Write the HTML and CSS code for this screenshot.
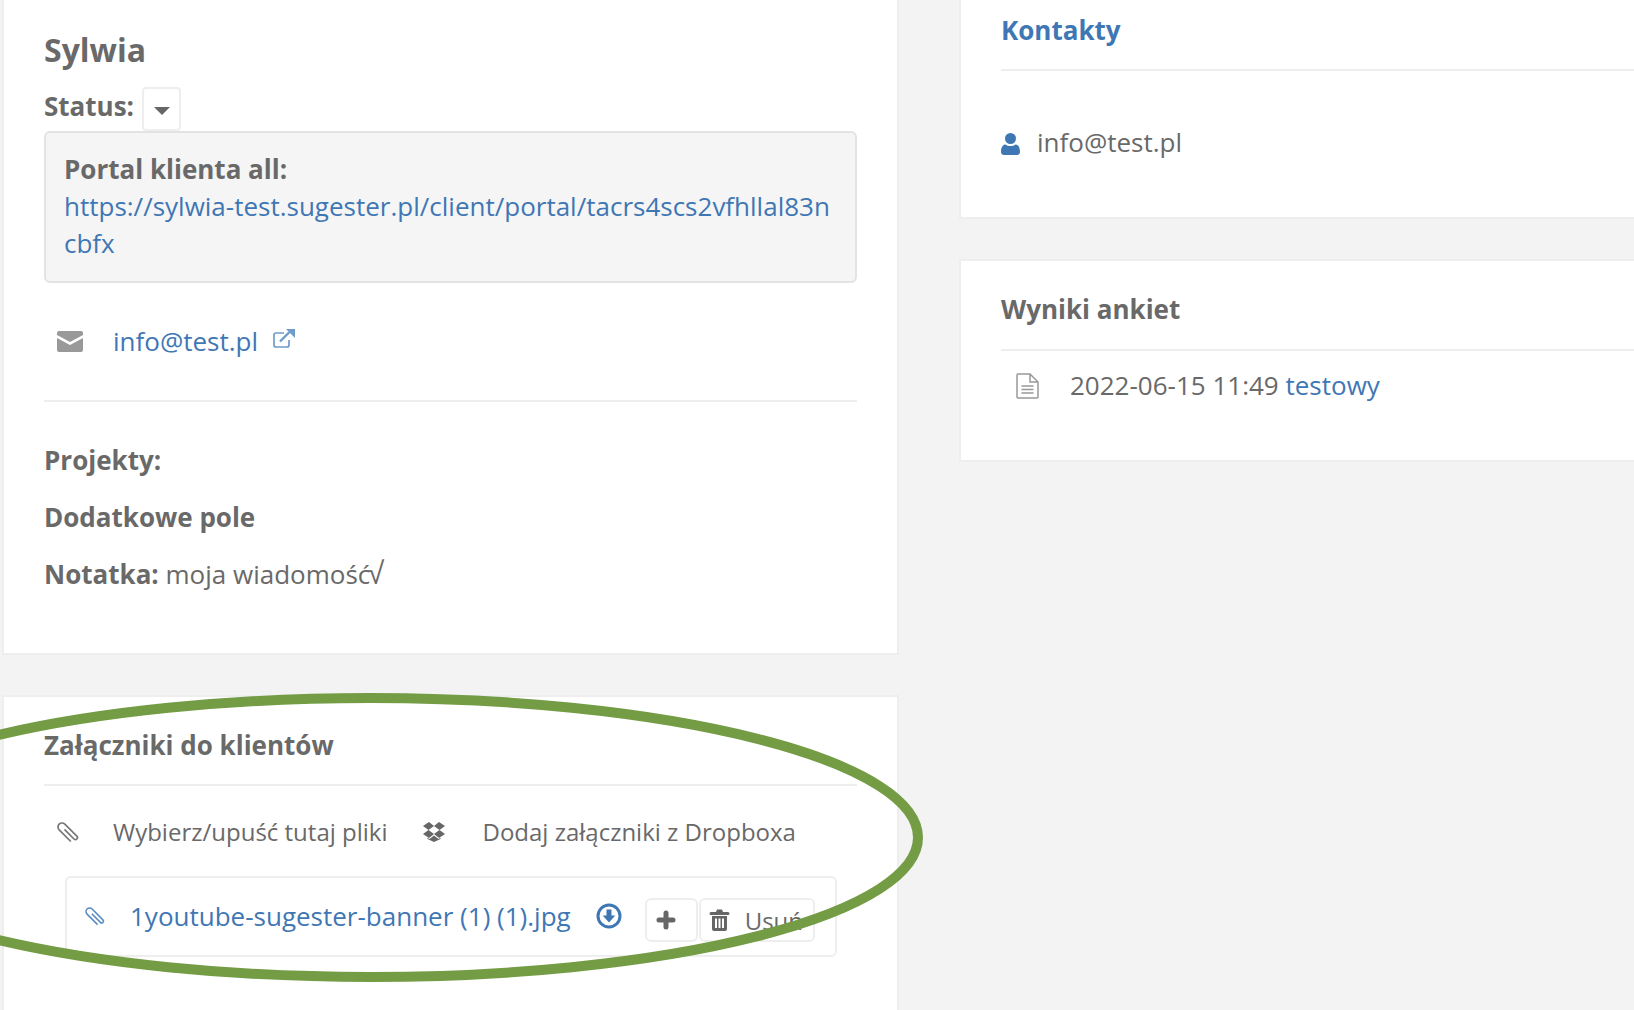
FILE: index.html
```html
<!DOCTYPE html>
<html lang="pl">
<head>
<meta charset="utf-8">
<title>Sylwia</title>
<link rel="stylesheet" href="styles.css">
</head>
<body>
<div class="page">
  <main class="left">
    <section class="card card-main">
      <h1 class="name">Sylwia</h1>
      <div class="status-row">
        <strong class="status-label">Status:</strong>
        <button class="caret-btn" type="button"><span class="caret"></span></button>
      </div>
      <div class="well">
        <strong>Portal klienta all:</strong><br>
        <a class="portal-link" href="#">https://sylwia-test.sugester.pl/client/portal/tacrs4scs2vfhllal83ncbfx</a>
      </div>
      <div class="mail-row">
        <svg class="ic-mail" viewBox="0 0 26 21"><path d="M2 0h22a2 2 0 0 1 2 2v2L13 11 0 4V2a2 2 0 0 1 2-2z"/><path d="M0 7l13 7 13-7v12a2 2 0 0 1-2 2H2a2 2 0 0 1-2-2z"/></svg>
        <a href="#">info@test.pl</a>
        <svg class="ic-ext" viewBox="0 0 22 19"><path d="M16 11v5a2 2 0 0 1-2 2H3a2 2 0 0 1-2-2V6a2 2 0 0 1 2-2h8" fill="none" stroke-width="1.7"/><path d="M7 12.500L16.500 3" fill="none" stroke-width="2.400"/><path class="fill" d="M13 0h9v9z"/></svg>
      </div>
      <hr class="rule rule-main">
      <p class="field"><strong>Projekty:</strong></p>
      <p class="field"><strong>Dodatkowe pole</strong></p>
      <p class="field"><strong>Notatka:</strong> moja wiadomość<span class="root">√</span></p>
    </section>

    <section class="card card-att">
      <h2 class="sec-title">Załączniki do klientów</h2>
      <hr class="rule">
      <div class="att-actions">
        <svg class="ic-clip" viewBox="0 0 20 20"><path transform="rotate(-45 10 10)" d="M10 5V18.500a2 2 0 0 0 4 0V1.500a4 4 0 0 0-8 0V18" fill="none" stroke-width="1.700"/></svg>
        <span class="act-text">Wybierz/upuść tutaj pliki</span>
        <svg class="ic-drop" viewBox="0 0 22 20"><path d="M6 0L0 4l5.500 4L11 4zM16 0l-5 4 5.500 4L22 4zM0 12l6 4 5-4-5.500-4zM22 12l-6 4-5-4 5.500-4zM11 13.500L6.500 17l-2-1.200V17L11 20l6.500-3v-1.200l-2 1.200z"/></svg>
        <span>Dodaj załączniki z Dropboxa</span>
      </div>
      <div class="file-box">
        <svg class="ic-clip ic-clip-blue" viewBox="0 0 20 20"><path transform="rotate(-45 10 10)" d="M10 5V18.500a2 2 0 0 0 4 0V1.500a4 4 0 0 0-8 0V18" fill="none" stroke-width="1.700"/></svg>
        <a class="file-link" href="#">1youtube-sugester-banner (1) (1).jpg</a>
        <svg class="ic-dl" viewBox="0 0 26 26"><circle cx="13" cy="13" r="11" fill="none" stroke-width="3"/><path class="fill" d="M10.500 6.500h5v6h3.800L13 19.500l-6.300-7h3.800z"/></svg>
        <button class="btn btn-plus" type="button"><svg class="ic-plus" viewBox="0 0 20 20"><path d="M10 3v14M3 10h14" fill="none" stroke-width="5" stroke-linecap="round"/></svg></button>
        <button class="btn btn-del" type="button"><svg class="ic-trash" viewBox="0 0 19 22"><path d="M6 3l1-2.500h5l1 2.500h5a1 1 0 0 1 0 3H1a1 1 0 0 1 0-3zM2 7h15v13a2 2 0 0 1-2 2H4a2 2 0 0 1-2-2zM5 9.500V19h2V9.500zM8.500 9.500V19h2V9.500zM12 9.500V19h2V9.500z" fill-rule="evenodd"/></svg><span>Usuń</span></button>
      </div>
    </section>
  </main>

  <aside class="right">
    <section class="card card-contacts">
      <h2 class="sec-title sec-link"><a href="#">Kontakty</a></h2>
      <hr class="rule">
      <div class="contact-row">
        <svg class="ic-user" viewBox="0 0 19 22"><circle cx="9.500" cy="5.500" r="5.500"/><path d="M0 19c0-5 2-7.500 4.500-7.500 1.500 1 3 1.500 5 1.500s3.500-.5 5-1.500C17 11.500 19 14 19 19c0 2-1.500 3-3 3H3c-1.500 0-3-1-3-3z"/></svg>
        <span>info@test.pl</span>
      </div>
    </section>
    <section class="card card-surveys">
      <h2 class="sec-title">Wyniki ankiet</h2>
      <hr class="rule rule-survey">
      <div class="survey-row">
        <svg class="ic-file" viewBox="0 0 23 26"><path d="M1 2a1 1 0 0 1 1-1h12l8 8v15a1 1 0 0 1-1 1H2a1 1 0 0 1-1-1zM14 1v8h8M5.500 13h12M5.500 16.500h12M5.500 20h12" fill="none" stroke-width="1.500"/></svg>
        <span>2022-06-15 11:49 <a href="#">testowy</a></span>
      </div>
    </section>
  </aside>
</div>
<svg class="marker" viewBox="0 0 1634 1010"><ellipse cx="370" cy="837.500" rx="548" ry="139.500"/></svg>
</body>
</html>
```

FILE: styles.css
```css
* { box-sizing: border-box; }
html, body { margin: 0; height: 1010px; overflow: hidden; }
body {
  background: #f3f3f3;
  color: #696969;
  font-family: "Open Sans", "Noto Sans", sans-serif;
  font-size: 26px;
  line-height: 37px;
  position: relative;
}
a { color: #3f77b4; text-decoration: none; }
strong { font-weight: 700; }
svg { display: block; flex: none; overflow: visible; }

.page { display: flex; padding-left: 2px; width: 1644px; height: 1010px; overflow: hidden; }
.left { width: 897px; flex: none; }
.right { flex: 1; margin-left: 60px; }

.card { background: #fff; border: 2px solid #eee; }
.card-main { border-top: 0; height: 655px; padding: 30px 40px 0; }
.card-att { margin-top: 40px; height: 400px; padding: 30px 40px 0; }
.card-contacts { border-top: 0; height: 219px; padding: 12px 0 0 40px; }
.card-surveys { margin-top: 40px; height: 203px; padding: 30px 0 0 40px; }

.name { margin: 0; font-size: 32px; line-height: 40px; font-weight: 700; }
.status-row { display: flex; margin-top: 17px; height: 44px; }
.status-label { line-height: 38px; }
.caret-btn {
  margin-left: 8px; width: 39px; height: 44px; padding: 4px 0 0;
  background: #fff; border: 2px solid #eee; border-radius: 4px;
  display: flex; align-items: center; justify-content: center;
}
.caret { border-left: 8px solid transparent; border-right: 8px solid transparent; border-top: 8px solid #666; }

.well {
  background: #f5f5f5; border: 2px solid #e3e3e3; border-radius: 6px;
  height: 152px; padding: 18px 18px 0;
}
.portal-link { word-break: break-all; }
.mail-row { display: flex; align-items: center; height: 37px; margin-top: 40px; padding-left: 13px; }
.mail-row a { margin-left: 30px; }
.ic-mail { width: 26px; height: 21px; fill: #999; }
.ic-ext { width: 22px; height: 19px; margin: -6px 0 0 15px; stroke: #6f9ccd; }
.ic-ext .fill { fill: #6f9ccd; stroke: none; }

.rule { margin: 0; border: 0; border-top: 2px solid #eee; }
.rule-main { margin-top: 40px; }
.field { margin: 20px 0 0; }
.rule-main + .field { margin-top: 40px; }
.root { font-family: "Liberation Sans", sans-serif; font-size: 31px; line-height: 0; margin-left: -3px; }

.sec-title { margin: 0; font-size: 26px; line-height: 37px; font-weight: 700; }
.sec-title + .rule { margin-top: 20px; }
.sec-title + .rule-survey { margin-top: 21px; }

.att-actions { display: flex; align-items: center; height: 37px; margin-top: 27px; font-size: 24px; }
.ic-clip { width: 20px; height: 20px; margin: 3px 0 0 14px; stroke: #777; }
.act-text { margin-left: 35px; }
.ic-drop { width: 22px; height: 20px; margin: 0 37px 0 36px; fill: #666; }

.file-box {
  display: flex; align-items: center; margin: 26px 0 0 21px; width: 772px; height: 81px;
  border: 2px solid #eee; border-radius: 6px; padding: 0 0 0 19px;
}
.ic-clip-blue { margin: 0; width: 18px; height: 18px; stroke: #5a8cc4; flex: none; }
.file-link { margin-left: 26px; white-space: nowrap; }
.ic-dl { width: 26px; height: 26px; margin: -2px 0 0 25px; stroke: #3f77b4; }
.ic-dl .fill { fill: #3f77b4; stroke: none; }

.btn {
  display: flex; align-items: center; height: 44px; background: #fff;
  border: 2px solid #eee; border-radius: 6px; margin-top: 7px; padding: 0;
  color: #696969; font: inherit; font-size: 24px;
}
.btn-plus { width: 53px; margin-left: 23px; justify-content: flex-start; padding-left: 9px; }
.btn-del { width: 116px; margin-left: 1px; padding-left: 9px; gap: 16px; }
.ic-plus { width: 20px; height: 20px; stroke: #666; }
.ic-trash { width: 19px; height: 22px; fill: #666; }

.contact-row { display: flex; align-items: center; height: 37px; margin-top: 53px; }
.contact-row span { margin-left: 17px; }
.ic-user { width: 19px; height: 22px; fill: #3f77b4; margin-top: 2px; }

.survey-row { display: flex; align-items: center; height: 37px; margin-top: 16px; padding-left: 15px; }
.survey-row span { margin-left: 31px; }
.ic-file { width: 23px; height: 26px; stroke: #999; }

.marker { position: absolute; left: 0; top: 0; width: 1634px; height: 1010px; pointer-events: none; }
.marker ellipse { fill: none; stroke: #739c45; stroke-width: 10; }
```
